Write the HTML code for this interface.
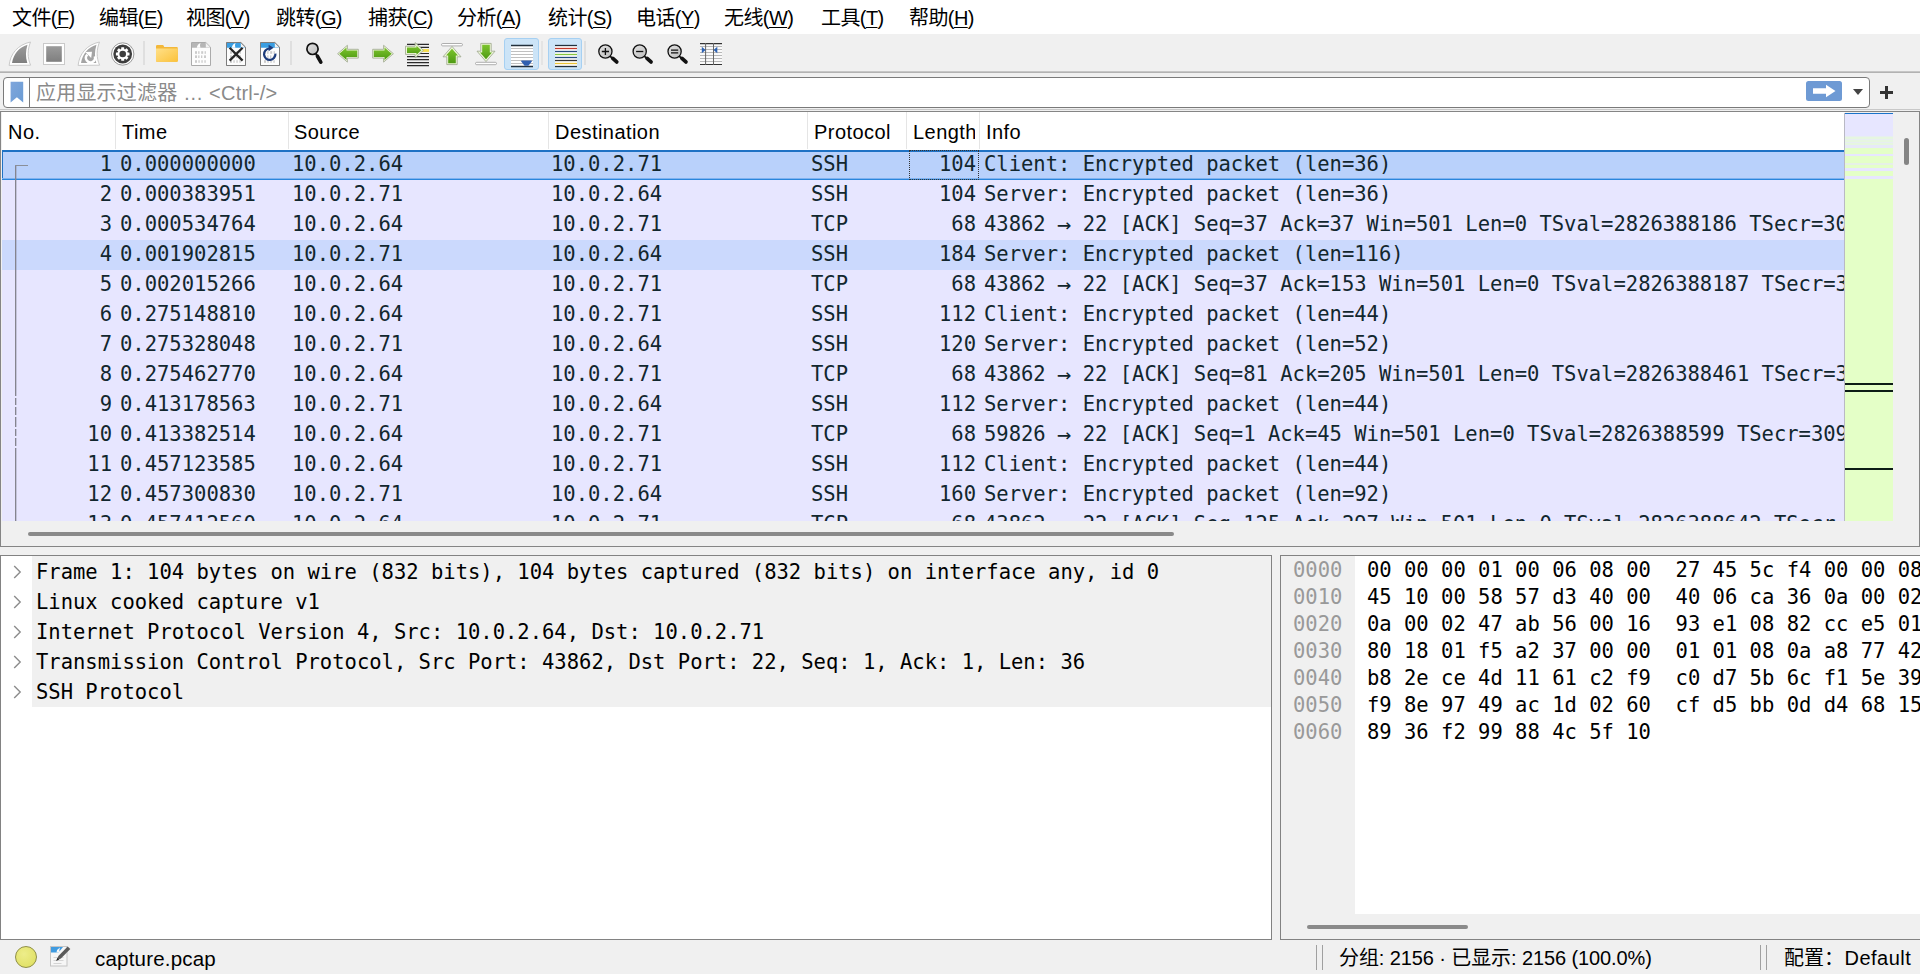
<!DOCTYPE html>
<html lang="zh-CN"><head><meta charset="utf-8"><title>capture.pcap</title>
<style>
html,body{margin:0;padding:0}
body{width:1920px;height:974px;overflow:hidden;background:#f0f0f0;position:relative;font-family:"Liberation Sans","Noto Sans CJK SC",sans-serif;font-size:20px;color:#000}
i{position:absolute;display:block;font-style:normal}
#menubar{position:absolute;left:0;top:0;width:1920px;height:34px;background:#fff}
.mi{position:absolute;top:2px;height:34px;line-height:33px;white-space:nowrap;font-size:20px;letter-spacing:-0.6px}
.mi u{text-decoration-thickness:1px;text-underline-offset:2px}
#toolbar{position:absolute;left:0;top:34px;width:1920px;height:37px;background:#f0f0f0;border-bottom:2px solid #b2b2b2}
#toolbar:after{content:"";position:absolute;left:0;top:37px;width:1920px;height:1px;background:#c6c6c6}
#tbsvg{position:absolute;left:0;top:0}
.tsep{top:7px;width:1px;height:25px;background:#c9c9c9}
.tact{top:4px;width:35px;height:32px;background:#cce4f7;border:1px solid #a6d0f2;border-radius:3px;box-sizing:border-box}
#filter{position:absolute;left:3px;top:77px;width:1867px;height:31px;box-sizing:border-box;border:1px solid #7a7a7a;border-radius:4px;background:#fff}
#bm{position:absolute;left:0;top:0;width:25px;height:29px;border-right:1px solid #7a7a7a}
#bm svg{position:absolute;left:5px;top:3px}
#ph{position:absolute;left:32px;top:1px;line-height:29px;color:#8a8a8a;white-space:nowrap;font-size:20px;letter-spacing:.2px}
#apply{position:absolute;left:1802px;top:3px;width:36px;height:20px}
#dd{position:absolute;left:1849px;top:11px;width:0;height:0;border-left:5.5px solid transparent;border-right:5.5px solid transparent;border-top:6px solid #444}
#plus{position:absolute;left:1880px;top:86px;width:13px;height:13px;background:linear-gradient(#333,#333) 0 5px/13px 3px no-repeat,linear-gradient(#333,#333) 5px 0/3px 13px no-repeat}
#plist{position:absolute;left:0;top:111px;width:1920px;height:436px;box-sizing:border-box;border:1px solid #858585;background:#f0f0f0}
#ln109{left:0;top:109px;width:1920px;height:1px;background:#c8c8c8}
#phead{position:absolute;left:1px;top:0;width:1843px;height:38px;background:#fff}
.hc{position:absolute;top:2px;line-height:37px;white-space:nowrap;letter-spacing:.45px}
.hs{top:0;width:1px;height:37px;background:#e5e5e5}
#prows{position:absolute;left:1px;top:38px;width:1843px;height:371px;overflow:hidden;background:#e7e6ff;font-family:"DejaVu Sans Mono","Liberation Mono",monospace;font-size:20.5px;color:#12272e}
.pr{position:absolute;left:0;width:1843px;height:30px;line-height:29px;background:#e7e6ff;white-space:pre}
.pr.sel{background:#b9d1fb;box-shadow:inset 0 2px 0 #1f72c4,inset 0 -1px 0 #2a86dc,inset 0 -2px 0 #7fb2f0,inset 1px 0 0 #1f72c4}
.pr.hov{background:#cbd9fd}
.c{position:absolute;top:0}
.sel .c{top:0}
.no{right:1733px;text-align:right}
.tm{left:118px}.sr{left:290px}.ds{left:549px}.pt{left:809px}
.ln{right:869px;text-align:right}
.in{left:982px}
#convline{left:13px;top:15px;width:1px;height:360px;background:#85858f;box-shadow:1px 0 0 rgba(133,133,150,.35)}
.cgap{left:12px;width:4px;height:2px;background:#e7e6ff}
#convtick{left:13px;top:15px;width:13px;height:1px;background:#8a8f98}
#focus{left:907px;top:0;width:70px;height:30px;box-sizing:border-box;border:1px dotted #333}
#hsb1{position:absolute;left:1px;top:409px;width:1890px;height:25px;background:#f0f0f0}
#hsb1 i{left:26px;top:11px;width:1146px;height:4px;border-radius:2px;background:#8a8a8a}
#mini{position:absolute;left:1844px;top:1px;width:48px;height:408px;overflow:hidden;box-shadow:-1px 0 0 #b9b9c4}
#mini i{left:0;width:48px}
#vsb{position:absolute;left:1892px;top:0;width:26px;height:434px;background:#f0f0f0}
#vsb i{left:11px;top:26px;width:5px;height:27px;border-radius:2.5px;background:#858585}
#details{position:absolute;left:0;top:555px;width:1272px;height:385px;box-sizing:border-box;border:1px solid #828282;background:#fff;overflow:hidden;font-family:"DejaVu Sans Mono","Liberation Mono",monospace;font-size:20.5px}
.dr{position:absolute;left:31px;width:1240px;height:31px;line-height:33px;background:#f0f0f0;white-space:pre}
.dr span{position:absolute;left:4px;top:0}
.exp{position:absolute;left:-19px;top:9px}
#bytes{position:absolute;left:1280px;top:555px;width:660px;height:385px;box-sizing:border-box;border:1px solid #828282;background:#fff;overflow:hidden;font-family:"DejaVu Sans Mono","Liberation Mono",monospace;font-size:20.5px}
#offbg{position:absolute;left:0;top:0;width:74px;height:358px;background:#f0f0f0}
.hr{position:absolute;left:0;height:27px;line-height:29px;white-space:pre;width:700px}
.off{position:absolute;left:12px;color:#999}
.hx{position:absolute;left:86px;color:#000}
#hsb2{position:absolute;left:0;top:358px;width:660px;height:25px;background:#f0f0f0}
#hsb2 i{left:26px;top:11px;width:161px;height:4px;border-radius:2px;background:#8a8a8a}
#status{position:absolute;left:0;top:940px;width:1920px;height:34px;background:#f0f0f0}
#led{position:absolute;left:14.5px;top:6px;width:22px;height:22px;box-sizing:border-box;border-radius:50%;background:radial-gradient(circle at 40% 35%,#eded8a,#dede5c);border:1.5px solid #8f8f45}
#note{position:absolute;left:48px;top:3px}
#fname{position:absolute;left:95px;top:1px;line-height:35px;letter-spacing:.2px;font-size:20.5px}
.ss{top:5px;width:1px;height:25px;background:#a0a0a0}
#pk{position:absolute;left:1339px;top:1px;line-height:34px;white-space:nowrap;letter-spacing:-.1px}
#pf{position:absolute;left:1784px;top:1px;line-height:34px;white-space:nowrap}
.dv{margin-left:.5px;letter-spacing:.5px}

.ar{display:inline-block;transform:scale(1.16,1.12)}

</style></head>
<body>
<div id="menubar">
<span class="mi" style="left:12px">文件(<u>F</u>)</span>
<span class="mi" style="left:99px">编辑(<u>E</u>)</span>
<span class="mi" style="left:186px">视图(<u>V</u>)</span>
<span class="mi" style="left:276px">跳转(<u>G</u>)</span>
<span class="mi" style="left:368px">捕获(<u>C</u>)</span>
<span class="mi" style="left:457px">分析(<u>A</u>)</span>
<span class="mi" style="left:548px">统计(<u>S</u>)</span>
<span class="mi" style="left:636px">电话(<u>Y</u>)</span>
<span class="mi" style="left:724px">无线(<u>W</u>)</span>
<span class="mi" style="left:821px">工具(<u>T</u>)</span>
<span class="mi" style="left:909px">帮助(<u>H</u>)</span>
</div>
<div id="toolbar">
<i class="tact" style="left:504px;width:35px"></i><i class="tact" style="left:548px;width:34px"></i>
<svg id="tbsvg" width="760" height="38" viewBox="0 34 760 38">
<defs>
<linearGradient id="gg" x1="0" y1="0" x2="0" y2="1"><stop offset="0" stop-color="#9b9b9b"/><stop offset="1" stop-color="#7f7f7f"/></linearGradient>
<linearGradient id="gr" x1="0" y1="0" x2="0" y2="1"><stop offset="0" stop-color="#7cc42c"/><stop offset="1" stop-color="#4e9a12"/></linearGradient>
<linearGradient id="fo" x1="0" y1="0" x2="1" y2="1"><stop offset="0" stop-color="#ffe089"/><stop offset="1" stop-color="#fbc23a"/></linearGradient>
<linearGradient id="ln" x1="0" y1="0" x2="1" y2="1"><stop offset="0" stop-color="#e2e2e2"/><stop offset="1" stop-color="#bdbdbd"/></linearGradient>
</defs>
<!-- start capture fin -->
<path d="M9.1 65.4 C10.3 54 17.5 44.8 30.5 42 C27.4 50 27.3 57.5 30.6 65.2 Z" fill="#fff" stroke="#c9c9c9" stroke-width="1"/>
<path d="M12 63 C13.6 54.3 18.8 47.4 27.5 44.8 C25.5 51.5 25.5 57 27.3 62.9 Z" fill="url(#gg)"/>
<!-- stop -->
<rect x="43.5" y="43.5" width="21" height="21" fill="#fff" stroke="#c9c9c9"/>
<rect x="46.2" y="46.2" width="15.6" height="15.6" fill="url(#gg)"/>
<!-- restart fin -->
<path d="M78.1 65.4 C79.3 54 86.5 44.8 99.5 42 C96.4 50 96.3 57.5 99.6 65.2 Z" fill="#fff" stroke="#c9c9c9" stroke-width="1"/>
<path d="M81 63 C82.6 54.3 87.8 47.4 96.5 44.8 C94.5 51.5 94.5 57 96.3 62.9 Z" fill="#a4a4a4"/>
<path d="M87.4 54.6 A4.500 4.500 0 1 0 94.700 56.300" fill="none" stroke="#fff" stroke-width="2.400"/>
<path d="M85.200 52 L92 51.800 L91.200 58 Z" fill="#fff"/>
<!-- options gear -->
<circle cx="122.7" cy="54" r="11.2" fill="#fff" stroke="#8d8d8d" stroke-width="0.9"/>
<circle cx="122.7" cy="54" r="9.4" fill="#3d3d3d"/>
<g fill="#fff"><circle cx="122.7" cy="54" r="5.2"/>
<g><rect x="121.2" y="47.2" width="3" height="3" rx=".5"/><rect x="121.200" y="57.8" width="3" height="3" rx=".5"/></g>
<g transform="rotate(45 122.7 54)"><rect x="121.2" y="47.2" width="3" height="3" rx=".5"/><rect x="121.200" y="57.8" width="3" height="3" rx=".5"/></g><g transform="rotate(90 122.7 54)"><rect x="121.2" y="47.2" width="3" height="3" rx=".5"/><rect x="121.200" y="57.8" width="3" height="3" rx=".5"/></g><g transform="rotate(135 122.7 54)"><rect x="121.2" y="47.2" width="3" height="3" rx=".5"/><rect x="121.200" y="57.8" width="3" height="3" rx=".5"/></g></g>
<circle cx="122.7" cy="54" r="3.3" fill="#3d3d3d"/>
<rect x="143.5" y="41" width="1" height="24" fill="#cdcdcd"/>
<!-- folder -->
<path d="M156 46.2 q0-1.2 1.2-1.2 h5.4 q.9 0 1.2 .9 l.4 1.1 h12.6 q1 0 1 1 v12.8 q0 1-1 1 h-19.8 q-1 0-1-1z" fill="#f3b83a"/>
<path d="M156 48.4 h21.8 v12.4 q0 1-1 1 h-19.8 q-1 0-1-1z" fill="url(#fo)"/>
<!-- file gray -->
<g><path d="M191.500 42.500 h14.300 l4.700 4.700 v18.300 h-19z" fill="#fdfdfd" stroke="#ababab"/>
<g fill="#cbcbcb"><rect x="195" y="51.200" width="2" height="2.600"/><rect x="198.200" y="51.200" width="1.300" height="2.600"/><rect x="201.200" y="51.200" width="2" height="2.600"/><rect x="204.600" y="51.200" width="1.300" height="2.600"/>
<rect x="195" y="55.400" width="2" height="2.600"/><rect x="198.200" y="55.400" width="1.300" height="2.600"/><rect x="201" y="55.400" width="1.300" height="2.600"/><rect x="204" y="55.400" width="2" height="2.600"/>
<rect x="195" y="60.200" width="2" height="2.600"/><rect x="198.400" y="60.200" width="1.300" height="2.600"/><rect x="201.400" y="60.200" width="1.300" height="2.600"/><rect x="204.400" y="60.200" width="1.300" height="2.600"/></g></g>
<path d="M192 43 h13.600 l4.400 4.400 v.3 h-18z" fill="#b6b6b6"/><path d="M196.800 47.700 q.4-3.400 3.800-4.700 q-1.400 2.300-.2 4.700z" fill="#fdfdfd"/>
<path d="M205.800 43 v4.400 h4.400z" fill="#f2f2f2"/>
<!-- close file -->
<g transform="translate(35 0)"><path d="M191.500 42.500 h14.300 l4.700 4.700 v18.300 h-19z" fill="#fdfdfd" stroke="#ababab"/>
<g fill="#cbcbcb"><rect x="195" y="51.200" width="2" height="2.600"/><rect x="198.200" y="51.200" width="1.300" height="2.600"/><rect x="201.200" y="51.200" width="2" height="2.600"/><rect x="204.600" y="51.200" width="1.300" height="2.600"/>
<rect x="195" y="55.400" width="2" height="2.600"/><rect x="198.200" y="55.400" width="1.300" height="2.600"/><rect x="201" y="55.400" width="1.300" height="2.600"/><rect x="204" y="55.400" width="2" height="2.600"/>
<rect x="195" y="60.200" width="2" height="2.600"/><rect x="198.400" y="60.200" width="1.300" height="2.600"/><rect x="201.400" y="60.200" width="1.300" height="2.600"/><rect x="204.400" y="60.200" width="1.300" height="2.600"/></g></g>
<path d="M227 43 h13.600 l4.400 4.400 v.3 h-18z" fill="#3a9ee2"/><path d="M231.800 47.700 q.4-3.400 3.800-4.700 q-1.400 2.300-.2 4.700z" fill="#fdfdfd"/>
<path d="M240.800 43 v4.400 h4.400z" fill="#f2f2f2"/>
<path d="M226.500 42.500 h14.300 l4.700 4.700 v18.300 h-19z" fill="none" stroke="#7d7d7d"/>
<path d="M229.600 47.700 L242.600 60.600 M242.600 47.700 L229.600 60.600" stroke="#262626" stroke-width="2.300"/>
<!-- reload file -->
<g transform="translate(69 0)"><path d="M191.500 42.500 h14.300 l4.700 4.700 v18.300 h-19z" fill="#fdfdfd" stroke="#ababab"/>
<g fill="#cbcbcb"><rect x="195" y="51.200" width="2" height="2.600"/><rect x="198.200" y="51.200" width="1.300" height="2.600"/><rect x="201.200" y="51.200" width="2" height="2.600"/><rect x="204.600" y="51.200" width="1.300" height="2.600"/>
<rect x="195" y="55.400" width="2" height="2.600"/><rect x="198.200" y="55.400" width="1.300" height="2.600"/><rect x="201" y="55.400" width="1.300" height="2.600"/><rect x="204" y="55.400" width="2" height="2.600"/>
<rect x="195" y="60.200" width="2" height="2.600"/><rect x="198.400" y="60.200" width="1.300" height="2.600"/><rect x="201.400" y="60.200" width="1.300" height="2.600"/><rect x="204.400" y="60.200" width="1.300" height="2.600"/></g></g>
<path d="M261 43 h13.600 l4.400 4.400 v.3 h-18z" fill="#3a9ee2"/>
<path d="M274.800 43 v4.400 h4.400z" fill="#f2f2f2"/>
<path d="M260.500 42.500 h14.300 l4.700 4.700 v18.300 h-19z" fill="none" stroke="#7d7d7d"/>
<path d="M269.300 48.500 A5.700 5.700 0 1 0 275.400 53.600" fill="none" stroke="#1d3c7c" stroke-width="2.200"/>
<path d="M268.600 44.700 L273.600 47.700 L268.600 51.200 Z" fill="#1d3c7c"/>
<rect x="290.500" y="41" width="1" height="24" fill="#cdcdcd"/>
<!-- find -->
<circle cx="312.500" cy="48.900" r="5.600" fill="url(#ln)" stroke="#111" stroke-width="1.700"/>
<path d="M315.600 53.200 L320.600 62" stroke="#111" stroke-width="1.800"/><path d="M317.400 56.200 L320.800 62.200" stroke="#111" stroke-width="3.600" stroke-linecap="round"/>
<!-- back -->
<path d="M337.600 53.700 L347.400 45.300 V49.300 H358.300 V58.100 H347.400 V62.100 Z" fill="#eef7d8" stroke="#9aa58a" stroke-width=".8" stroke-linejoin="round"/>
<path d="M339.300 53.700 L346.500 47.500 V50.400 H357.200 V57 H346.500 V59.900 Z" fill="url(#gr)"/>
<!-- forward -->
<path d="M393.400 53.700 L383.600 45.300 V49.300 H372.700 V58.100 H383.600 V62.100 Z" fill="#eef7d8" stroke="#9aa58a" stroke-width=".8" stroke-linejoin="round"/>
<path d="M391.700 53.700 L384.500 47.500 V50.400 H373.800 V57 H384.500 V59.900 Z" fill="url(#gr)"/>
<!-- goto -->
<g stroke="#2a2a2a" stroke-width="1.200"><path d="M407 44.300h22M407 47.400h22M407 53.500h22M407 56.600h22M407 59.600h22M407 62.600h22M407 65.600h22"/></g>
<rect x="407" y="49.100" width="22" height="2.800" fill="#f6dd4a"/>
<path d="M423.400 50.300 L415.100 42.600 V46.200 H405.500 V54.400 H415.100 V58 Z" fill="#eef7d8" stroke="#9aa58a" stroke-width=".8" stroke-linejoin="round"/>
<path d="M421.300 50.300 L416.500 45.800 V47.600 H407 V53 H416.500 V54.800 Z" fill="url(#gr)"/>
<!-- top -->
<rect x="441.500" y="43.500" width="21" height="2.400" rx="1.200" fill="#fff" stroke="#9a9a9a" stroke-width=".8"/>
<path d="M452 46.400 L461 56.800 H457.200 V64.600 H446.800 V56.800 H443 Z" fill="#eef7d8" stroke="#9aa58a" stroke-width=".8" stroke-linejoin="round"/>
<path d="M452 48.800 L458 55.500 H455.800 V63.200 H448.200 V55.500 H446 Z" fill="url(#gr)"/>
<!-- bottom -->
<rect x="475.500" y="62.300" width="21" height="2.400" rx="1.200" fill="#fff" stroke="#9a9a9a" stroke-width=".8"/>
<path d="M486 61.600 L477 51.200 H480.800 V43.400 H491.200 V51.200 H495 Z" fill="#eef7d8" stroke="#9aa58a" stroke-width=".8" stroke-linejoin="round"/>
<path d="M486 59.200 L480 52.500 H482.200 V44.800 H489.800 V52.500 H492 Z" fill="url(#gr)"/>
<!-- autoscroll -->
<rect x="511" y="45" width="22" height="22" fill="#fff"/>
<g stroke="#c0c0c0" stroke-width="1.100"><path d="M511 48.500h22M511 51.500h22M511 54.500h22M511 57.500h22M511 60.500h22M511 63.500h22"/></g>
<g stroke="#22303c" stroke-width="1.300"><path d="M511 45.500h22M511 66.500h22"/></g>
<path d="M521 61.200 q0-.6 .8-.6 h9.400 q.8 0 .8 .6 l-3.600 4.600 h-3.800z" fill="#2f5fb0"/>
<rect x="541.500" y="41" width="1" height="24" fill="#d8d8d8"/>
<!-- colorize -->
<rect x="555" y="45" width="22" height="22" fill="#fff"/>
<g stroke-width="1.300"><path d="M555 45.500h22" stroke="#22303c"/><path d="M555 48.500h22" stroke="#c0392b"/><path d="M555 51.500h22" stroke="#274a7f"/><path d="M555 54.500h22" stroke="#86c440"/><path d="M555 57.500h22" stroke="#274a7f"/><path d="M555 60.500h22" stroke="#333"/><path d="M555 63.500h22" stroke="#e9c238"/><path d="M555 66.500h22" stroke="#22303c"/></g>
<rect x="584.500" y="41" width="1" height="24" fill="#cdcdcd"/>
<!-- zoom in -->
<g><circle cx="605.400" cy="51.500" r="6.600" fill="url(#ln)" stroke="#111" stroke-width="1.300"/>
<path d="M610 56.200 L616 61.500" stroke="#111" stroke-width="1.800"/><path d="M612.800 58.400 L616.700 61.900" stroke="#111" stroke-width="3.800" stroke-linecap="round"/></g>
<path d="M601.800 51.500h7.200M605.400 47.900v7.200" stroke="#111" stroke-width="1.300"/>
<g transform="translate(34.3 0)"><circle cx="605.400" cy="51.500" r="6.600" fill="url(#ln)" stroke="#111" stroke-width="1.300"/>
<path d="M610 56.200 L616 61.500" stroke="#111" stroke-width="1.800"/><path d="M612.800 58.400 L616.700 61.900" stroke="#111" stroke-width="3.800" stroke-linecap="round"/></g>
<path d="M636.100 51.500h7.200" stroke="#111" stroke-width="1.300"/>
<g transform="translate(69.2 0)"><circle cx="605.400" cy="51.500" r="6.600" fill="url(#ln)" stroke="#111" stroke-width="1.300"/>
<path d="M610 56.200 L616 61.500" stroke="#111" stroke-width="1.800"/><path d="M612.800 58.400 L616.700 61.900" stroke="#111" stroke-width="3.800" stroke-linecap="round"/></g>
<path d="M671 50.200h7.200M671 52.800h7.200" stroke="#111" stroke-width="1.300"/>
<!-- resize columns -->
<rect x="700" y="44" width="22" height="20" fill="#fafafa"/>
<g stroke="#b8b8b8" stroke-width="1"><path d="M700 46.500h22M700 49.500h22M700 52.500h22M700 55.500h22M700 58.500h22M700 61.500h22"/></g>
<g stroke="#333" stroke-width="1.200"><path d="M700 43.600h22M700 64.500h22"/></g><g stroke="#666" stroke-width="1"><path d="M705.600 43v22M713.500 43v22"/></g>
<path d="M701.800 46.800 L705.600 50 L701.800 53.200z" fill="#2f63b3"/><path d="M717.300 46.800 L713.500 50 L717.300 53.200z" fill="#2f63b3"/>
</svg>
</div>
<div id="filter"><div id="bm"><svg width="16" height="23" viewBox="0 0 16 23"><defs><linearGradient id="bmg" x1="0" y1="0" x2="1" y2="1"><stop offset="0" stop-color="#7fa6dc"/><stop offset="1" stop-color="#6b9cd4"/></linearGradient></defs><path d="M1.600 .800h12.600v20.600l-6.300-5.200-6.300 5.200z" fill="url(#bmg)"/></svg></div><span id="ph">应用显示过滤器 … &lt;Ctrl-/&gt;</span>
<div id="apply"><svg width="36" height="20" viewBox="0 0 36 20"><rect width="36" height="20" rx="2.5" fill="#6e9ad4"/><path d="M7 7.3h13V3.8L29.5 10 20 16.2v-3.5H7z" fill="#fff"/></svg></div>
<div id="dd"></div></div>
<div id="plus"></div>
<i id="ln109"></i>
<div id="plist">
<div id="phead"><span class="hc" style="left:6px">No.</span><i class="hs" style="left:113px"></i><span class="hc" style="left:120px">Time</span><i class="hs" style="left:286px"></i><span class="hc" style="left:292px">Source</span><i class="hs" style="left:546px"></i><span class="hc" style="left:553px">Destination</span><i class="hs" style="left:805px"></i><span class="hc" style="left:812px">Protocol</span><i class="hs" style="left:904px"></i><span class="hc" style="left:911px;width:62px;overflow:hidden">Length</span><i class="hs" style="left:977px"></i><span class="hc" style="left:984px">Info</span></div>
<div id="prows">
<div class="pr sel" style="top:0px"><span class="c no">1</span><span class="c tm">0.000000000</span><span class="c sr">10.0.2.64</span><span class="c ds">10.0.2.71</span><span class="c pt">SSH</span><span class="c ln">104</span><span class="c in">Client: Encrypted packet (len=36)</span></div>
<div class="pr" style="top:30px"><span class="c no">2</span><span class="c tm">0.000383951</span><span class="c sr">10.0.2.71</span><span class="c ds">10.0.2.64</span><span class="c pt">SSH</span><span class="c ln">104</span><span class="c in">Server: Encrypted packet (len=36)</span></div>
<div class="pr" style="top:60px"><span class="c no">3</span><span class="c tm">0.000534764</span><span class="c sr">10.0.2.64</span><span class="c ds">10.0.2.71</span><span class="c pt">TCP</span><span class="c ln">68</span><span class="c in">43862 <span class="ar">→</span> 22 [ACK] Seq=37 Ack=37 Win=501 Len=0 TSval=2826388186 TSecr=3091538377</span></div>
<div class="pr hov" style="top:90px"><span class="c no">4</span><span class="c tm">0.001902815</span><span class="c sr">10.0.2.71</span><span class="c ds">10.0.2.64</span><span class="c pt">SSH</span><span class="c ln">184</span><span class="c in">Server: Encrypted packet (len=116)</span></div>
<div class="pr" style="top:120px"><span class="c no">5</span><span class="c tm">0.002015266</span><span class="c sr">10.0.2.64</span><span class="c ds">10.0.2.71</span><span class="c pt">TCP</span><span class="c ln">68</span><span class="c in">43862 <span class="ar">→</span> 22 [ACK] Seq=37 Ack=153 Win=501 Len=0 TSval=2826388187 TSecr=3091538378</span></div>
<div class="pr" style="top:150px"><span class="c no">6</span><span class="c tm">0.275148810</span><span class="c sr">10.0.2.64</span><span class="c ds">10.0.2.71</span><span class="c pt">SSH</span><span class="c ln">112</span><span class="c in">Client: Encrypted packet (len=44)</span></div>
<div class="pr" style="top:180px"><span class="c no">7</span><span class="c tm">0.275328048</span><span class="c sr">10.0.2.71</span><span class="c ds">10.0.2.64</span><span class="c pt">SSH</span><span class="c ln">120</span><span class="c in">Server: Encrypted packet (len=52)</span></div>
<div class="pr" style="top:210px"><span class="c no">8</span><span class="c tm">0.275462770</span><span class="c sr">10.0.2.64</span><span class="c ds">10.0.2.71</span><span class="c pt">TCP</span><span class="c ln">68</span><span class="c in">43862 <span class="ar">→</span> 22 [ACK] Seq=81 Ack=205 Win=501 Len=0 TSval=2826388461 TSecr=3091538652</span></div>
<div class="pr" style="top:240px"><span class="c no">9</span><span class="c tm">0.413178563</span><span class="c sr">10.0.2.71</span><span class="c ds">10.0.2.64</span><span class="c pt">SSH</span><span class="c ln">112</span><span class="c in">Server: Encrypted packet (len=44)</span></div>
<div class="pr" style="top:270px"><span class="c no">10</span><span class="c tm">0.413382514</span><span class="c sr">10.0.2.64</span><span class="c ds">10.0.2.71</span><span class="c pt">TCP</span><span class="c ln">68</span><span class="c in">59826 <span class="ar">→</span> 22 [ACK] Seq=1 Ack=45 Win=501 Len=0 TSval=2826388599 TSecr=3091538790</span></div>
<div class="pr" style="top:300px"><span class="c no">11</span><span class="c tm">0.457123585</span><span class="c sr">10.0.2.64</span><span class="c ds">10.0.2.71</span><span class="c pt">SSH</span><span class="c ln">112</span><span class="c in">Client: Encrypted packet (len=44)</span></div>
<div class="pr" style="top:330px"><span class="c no">12</span><span class="c tm">0.457300830</span><span class="c sr">10.0.2.71</span><span class="c ds">10.0.2.64</span><span class="c pt">SSH</span><span class="c ln">160</span><span class="c in">Server: Encrypted packet (len=92)</span></div>
<div class="pr" style="top:360px"><span class="c no">13</span><span class="c tm">0.457412560</span><span class="c sr">10.0.2.64</span><span class="c ds">10.0.2.71</span><span class="c pt">TCP</span><span class="c ln">68</span><span class="c in">43862 <span class="ar">→</span> 22 [ACK] Seq=125 Ack=297 Win=501 Len=0 TSval=2826388642 TSecr=3091538834</span></div>
<i id="convline"></i><i id="convtick"></i><i class="cgap" style="top:246px"></i><i class="cgap" style="top:255px"></i><i class="cgap" style="top:265px"></i><i class="cgap" style="top:277px"></i><i class="cgap" style="top:286px"></i><i class="cgap" style="top:296px"></i><i id="focus"></i>
</div>
<div id="hsb1"><i></i></div>
<div id="mini"><i style="top:0px;height:1px;background:#1a73c9"></i><i style="top:1px;height:22px;background:#e7e6ff"></i><i style="top:23px;height:385px;background:#e4ffc7"></i><i style="top:23px;height:1px;background:#e7eef0"></i><i style="top:24px;height:2px;background:#e6f6e0"></i><i style="top:26px;height:1px;background:#e7eef0"></i><i style="top:27px;height:2px;background:#e6f6e0"></i><i style="top:29px;height:1px;background:#e7eef0"></i><i style="top:30px;height:2px;background:#e6f6e0"></i><i style="top:32px;height:3px;background:#e7e9f8"></i><i style="top:41px;height:2px;background:#e7e6ff"></i><i style="top:50px;height:2px;background:#e6f0e6"></i><i style="top:55px;height:3px;background:#e7e6ff"></i><i style="top:63px;height:3px;background:#e7e6ff"></i><i style="top:270px;height:2px;background:#0c1c16"></i><i style="top:277px;height:2px;background:#0c1c16"></i><i style="top:355px;height:2px;background:#0c1c16"></i></div>
<div id="vsb"><i></i></div>
</div>
<div id="details">
<div class="dr" style="top:0px"><svg class="exp" width="9" height="14" viewBox="0 0 9 14"><path d="M1.2 1l6 6-6 6" fill="none" stroke="#8c8c8c" stroke-width="1.4"/></svg><span>Frame 1: 104 bytes on wire (832 bits), 104 bytes captured (832 bits) on interface any, id 0</span></div>
<div class="dr" style="top:30px"><svg class="exp" width="9" height="14" viewBox="0 0 9 14"><path d="M1.2 1l6 6-6 6" fill="none" stroke="#8c8c8c" stroke-width="1.4"/></svg><span>Linux cooked capture v1</span></div>
<div class="dr" style="top:60px"><svg class="exp" width="9" height="14" viewBox="0 0 9 14"><path d="M1.2 1l6 6-6 6" fill="none" stroke="#8c8c8c" stroke-width="1.4"/></svg><span>Internet Protocol Version 4, Src: 10.0.2.64, Dst: 10.0.2.71</span></div>
<div class="dr" style="top:90px"><svg class="exp" width="9" height="14" viewBox="0 0 9 14"><path d="M1.2 1l6 6-6 6" fill="none" stroke="#8c8c8c" stroke-width="1.4"/></svg><span>Transmission Control Protocol, Src Port: 43862, Dst Port: 22, Seq: 1, Ack: 1, Len: 36</span></div>
<div class="dr" style="top:120px"><svg class="exp" width="9" height="14" viewBox="0 0 9 14"><path d="M1.2 1l6 6-6 6" fill="none" stroke="#8c8c8c" stroke-width="1.4"/></svg><span>SSH Protocol</span></div>
</div>
<div id="bytes"><div id="offbg"></div>
<div class="hr" style="top:0px"><span class="off">0000</span><span class="hx">00 00 00 01 00 06 08 00  27 45 5c f4 00 00 08 00</span></div>
<div class="hr" style="top:27px"><span class="off">0010</span><span class="hx">45 10 00 58 57 d3 40 00  40 06 ca 36 0a 00 02 40</span></div>
<div class="hr" style="top:54px"><span class="off">0020</span><span class="hx">0a 00 02 47 ab 56 00 16  93 e1 08 82 cc e5 01 2b</span></div>
<div class="hr" style="top:81px"><span class="off">0030</span><span class="hx">80 18 01 f5 a2 37 00 00  01 01 08 0a a8 77 42 3a</span></div>
<div class="hr" style="top:108px"><span class="off">0040</span><span class="hx">b8 2e ce 4d 11 61 c2 f9  c0 d7 5b 6c f1 5e 39 1f</span></div>
<div class="hr" style="top:135px"><span class="off">0050</span><span class="hx">f9 8e 97 49 ac 1d 02 60  cf d5 bb 0d d4 68 15 7c</span></div>
<div class="hr" style="top:162px"><span class="off">0060</span><span class="hx">89 36 f2 99 88 4c 5f 10</span></div>
<div id="hsb2"><i></i></div></div>
<div id="status">
<div id="led"></div>
<div id="note"><svg width="26" height="26" viewBox="0 0 26 26"><rect x="2.5" y="3.5" width="16.500" height="19.500" fill="#f6f6f6" stroke="#c4c4c4"/><path d="M3 4h12l-4.500 5.500h-7.500z" fill="#3f9be0"/><path d="M8.500 9.500q.5-3.500 3.500-5q-1.200 2.500-.3 5z" fill="#f6f6f6"/><path d="M5.500 14.500h10M5.500 17.500h10M5.500 20.500h8" stroke="#d4d4d4"/><path d="M8.300 17.700l2.100-4.600 9.300-9.600 2.600 2.500-9.400 9.600z" fill="#5a5a5a"/><path d="M8.300 17.700l1.100-2.700 1.700 1.600z" fill="#222"/></svg></div>
<span id="fname">capture.pcap</span>
<i class="ss" style="left:1316px"></i><i class="ss" style="left:1322px"></i>
<span id="pk">分组: 2156 · 已显示: 2156 (100.0%)</span>
<i class="ss" style="left:1760px"></i><i class="ss" style="left:1766px"></i>
<span id="pf">配置：<span class="dv">Default</span></span>
</div>
</body></html>
